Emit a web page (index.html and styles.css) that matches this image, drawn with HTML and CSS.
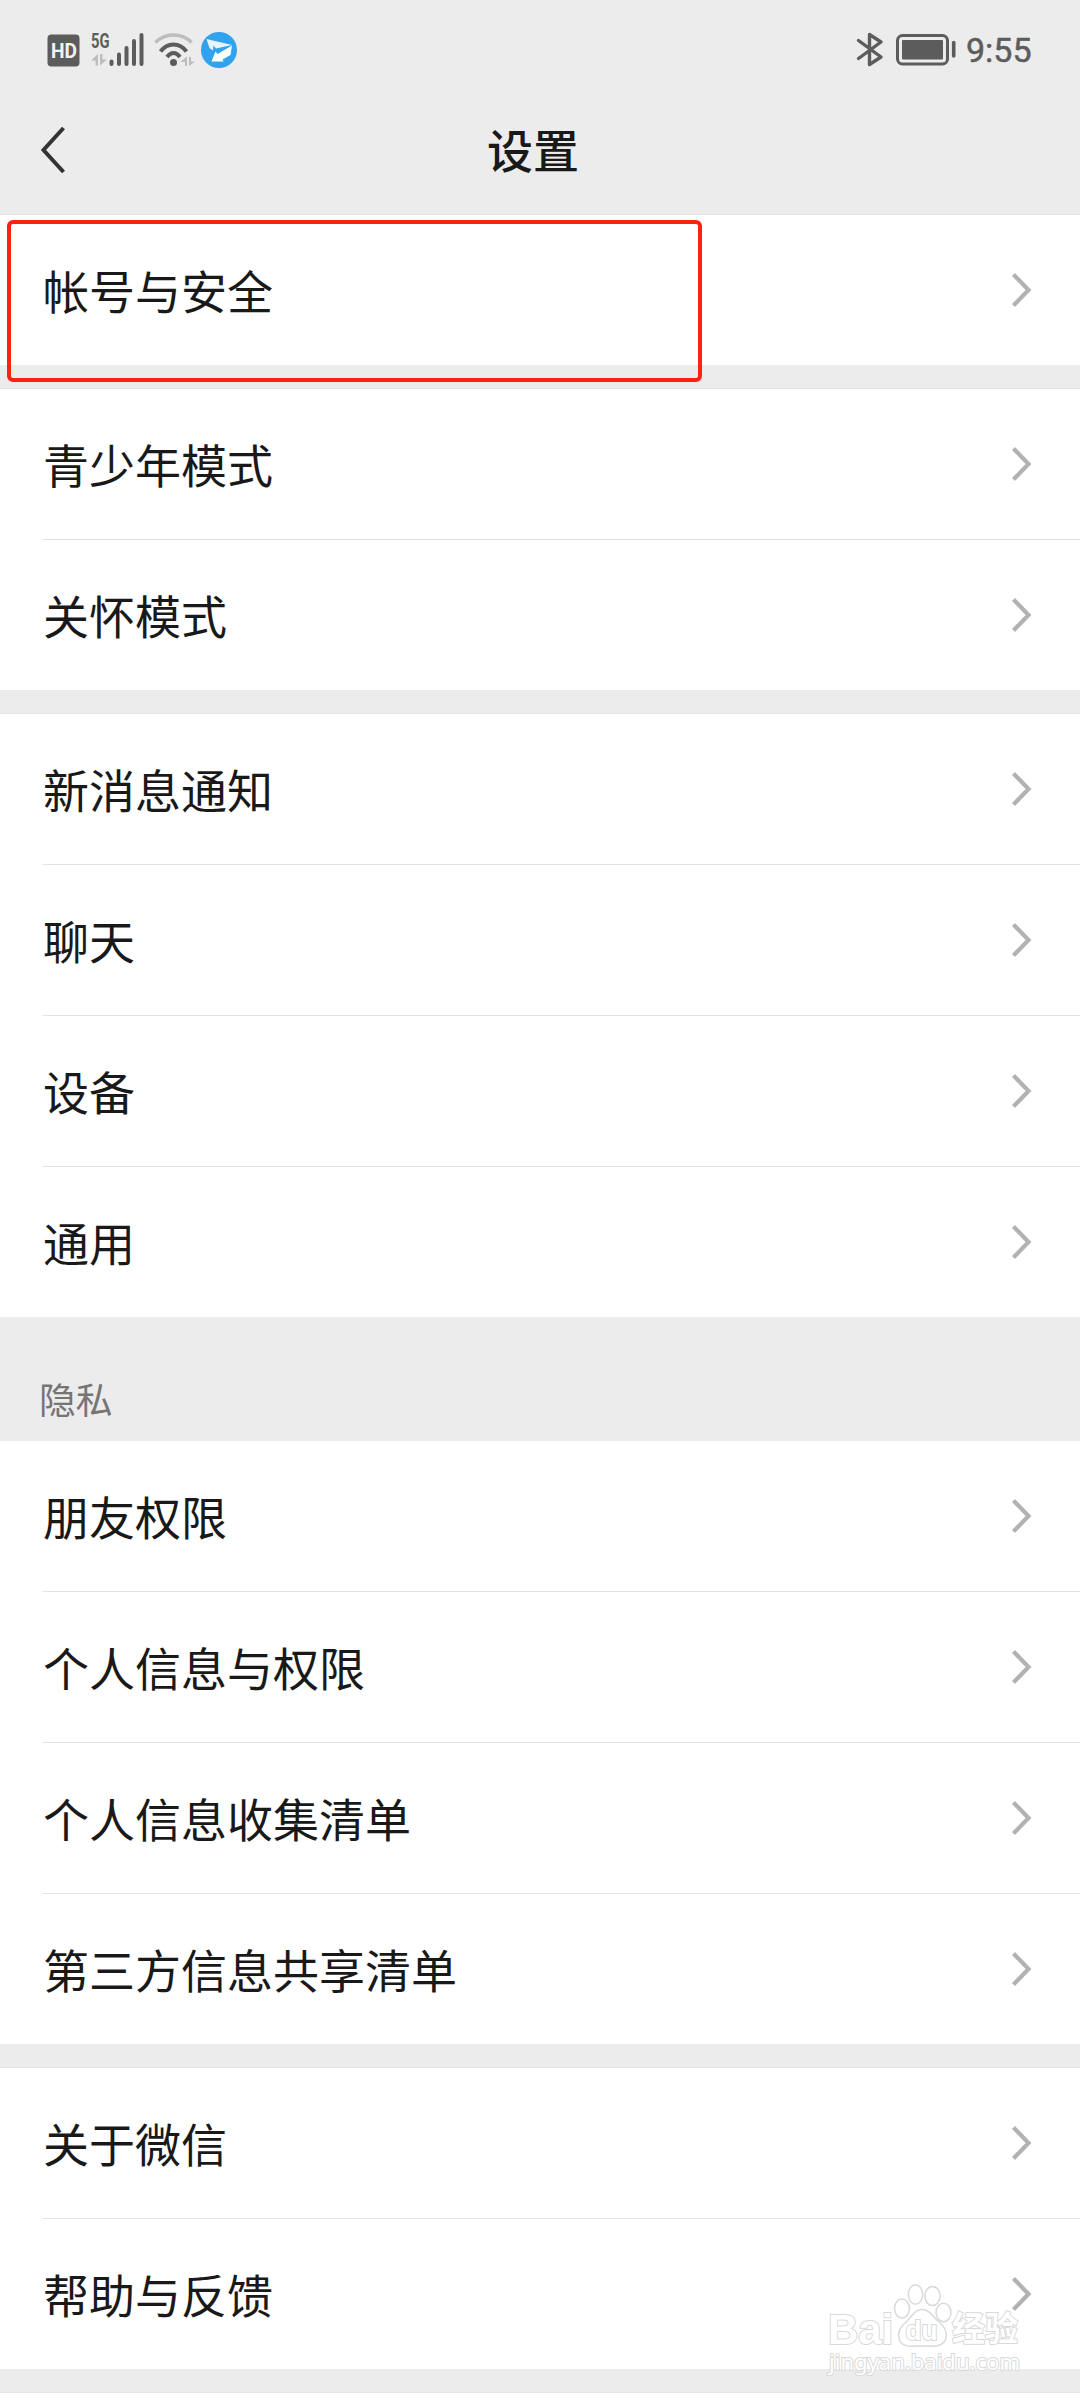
FILE: index.html
```html
<!DOCTYPE html>
<html lang="zh-CN">
<head>
<meta charset="utf-8">
<title>设置</title>
<link rel="stylesheet" href="styles.css">
</head>
<body>
<svg class="defs" width="0" height="0" aria-hidden="true">
  <symbol id="chevron" viewBox="0 0 24 40"><path d="M3.500 4.500 L18.500 20 L3.500 35.500" fill="none" stroke="#b2b2b2" stroke-width="4.2"/></symbol>
</svg>
<div class="screen">
  <header class="top">
    <div class="status">
      <svg class="status-left" width="200" height="44" viewBox="44 28 200 44">
        <rect x="47.5" y="34.5" width="32" height="32" rx="4" fill="#5c5c5c"/>
        <text class="hd" x="51" y="57.5" textLength="26" lengthAdjust="spacingAndGlyphs">HD</text>
        <text class="net" x="91" y="48" textLength="18.5" lengthAdjust="spacingAndGlyphs">5G</text>
        <path d="M91 60.500 L98 54 V65.500 H95.500 V60.500Z M100 54 H102.500 V59.500 H107 L100 65.500Z" fill="#bdbdbd"/>
        <path d="M111.500 64V61.500M119 64V54.500M126.500 64V48M134 64V41M141.500 64V35" stroke="#5c5c5c" stroke-width="4" stroke-linecap="round"/>
        <g fill="none" stroke-linecap="butt">
          <path d="M155.500 42.500 C165 32.500 182 32.500 191.500 42.500" stroke="#bdbdbd" stroke-width="3.500"/>
          <path d="M160.500 51.500 C167.500 42 179.500 42 186.500 51.500" stroke="#5c5c5c" stroke-width="4"/>
          <path d="M167 57 C171 51.500 176 51.500 180 57" stroke="#5c5c5c" stroke-width="4"/>
        </g>
        <circle cx="173.500" cy="62.500" r="3.500" fill="#5c5c5c"/>
        <path d="M180.500 62 L187 56.500 V66 H185 V62Z M189 57 H191 V61.500 H195 L189 66Z" fill="#bdbdbd"/>
        <circle cx="219" cy="50" r="18" fill="#30a2ee"/>
        <path d="M206.500 39 L232 45 L216 48.500 L213.500 45.500 L213 50.500 L209.500 48Z" fill="#e6f5ff"/>
        <path d="M232 45.500 L230.500 55 L222.500 59.500 L223.500 61.500 L211.500 61.500 L215.500 51.500 L217.500 54 Z" fill="#fff"/>
      </svg>
      <div class="status-right">
        <svg width="104" height="44" viewBox="854 28 104 44">
          <path d="M858.500 40.500 L881 57 L869.500 64.500 V34.500 L881 42 L858.500 58.500" fill="none" stroke="#5c5c5c" stroke-width="3.400" stroke-linejoin="round" stroke-linecap="round"/>
          <rect x="897.500" y="35.500" width="50" height="28.500" rx="5" fill="none" stroke="#5c5c5c" stroke-width="3"/>
          <rect x="902" y="40" width="41" height="19.500" rx="1" fill="#5c5c5c"/>
          <path d="M953.700 42.500V56" stroke="#5c5c5c" stroke-width="3.600" stroke-linecap="round"/>
        </svg>
        <span class="time">9:55</span>
      </div>
    </div>
    <div class="nav">
      <svg class="back" width="32" height="60" viewBox="0 0 32 60"><path d="M27.500 9 L7.500 31 L27.500 53" fill="none" stroke="#333" stroke-width="4"/></svg>
      <h1 class="title">设置</h1>
    </div>
  </header>

  <main class="groups">
    <section class="group">
      <div class="row"><span class="label">帐号与安全</span><svg class="chev"><use href="#chevron"/></svg></div>
      <div class="highlight"></div>
    </section>
    <section class="group">
      <div class="row"><span class="label">青少年模式</span><svg class="chev"><use href="#chevron"/></svg></div>
      <div class="row"><span class="label">关怀模式</span><svg class="chev"><use href="#chevron"/></svg></div>
    </section>
    <section class="group">
      <div class="row"><span class="label">新消息通知</span><svg class="chev"><use href="#chevron"/></svg></div>
      <div class="row"><span class="label">聊天</span><svg class="chev"><use href="#chevron"/></svg></div>
      <div class="row"><span class="label">设备</span><svg class="chev"><use href="#chevron"/></svg></div>
      <div class="row"><span class="label">通用</span><svg class="chev"><use href="#chevron"/></svg></div>
    </section>
    <h2 class="section-title">隐私</h2>
    <section class="group">
      <div class="row"><span class="label">朋友权限</span><svg class="chev"><use href="#chevron"/></svg></div>
      <div class="row"><span class="label">个人信息与权限</span><svg class="chev"><use href="#chevron"/></svg></div>
      <div class="row"><span class="label">个人信息收集清单</span><svg class="chev"><use href="#chevron"/></svg></div>
      <div class="row"><span class="label">第三方信息共享清单</span><svg class="chev"><use href="#chevron"/></svg></div>
    </section>
    <section class="group">
      <div class="row"><span class="label">关于微信</span><svg class="chev"><use href="#chevron"/></svg></div>
      <div class="row"><span class="label">帮助与反馈</span><svg class="chev"><use href="#chevron"/></svg></div>
    </section>
    <section class="group rest"></section>
  </main>

  <svg class="watermark" width="240" height="120" viewBox="820 2275 240 120">
    <g fill="#fff" stroke="#d9d9d9" stroke-width="1.500">
      <ellipse cx="902" cy="2308.500" rx="7.500" ry="9.500"/>
      <ellipse cx="915.500" cy="2294.500" rx="7.200" ry="9.800"/>
      <ellipse cx="932.500" cy="2296" rx="7.600" ry="9.600"/>
      <ellipse cx="943.500" cy="2312.500" rx="7.500" ry="9.300"/>
      <path d="M922 2309.500 C930 2309.500 933 2317 939 2322 C945 2327 948 2333 945.500 2339.500 C942 2348 932 2346 922 2346 C912 2346 903 2348 899.500 2340 C897 2333 900 2327 906 2322 C912 2317 914 2309.500 922 2309.500Z"/>
    </g>
    <text class="wm wm-logo" x="828" y="2344" textLength="65" lengthAdjust="spacingAndGlyphs">Bai</text>
    <text class="wm wm-du" x="905.500" y="2339.500" textLength="32" lengthAdjust="spacingAndGlyphs">du</text>
    <text class="wm wm-cn" x="952" y="2341" textLength="66" lengthAdjust="spacingAndGlyphs">经验</text>
    <text class="wm wm-url" x="829" y="2370" textLength="191" lengthAdjust="spacingAndGlyphs">jingyan.baidu.com</text>
  </svg>
</div>
</body>
</html>
```
FILE: styles.css
```css
* { box-sizing: border-box; margin: 0; padding: 0; }

body {
  background: #fff;
  color: #191919;
  font-family: "Noto Sans CJK SC", sans-serif;
}

.defs { position: absolute; }

.screen {
  position: relative;
  width: 1080px;
  height: 2400px;
  overflow: hidden;
  background: #ececec;
}

.top { height: 215px; border-bottom: 1px solid #e4e4e4; }

.status {
  display: flex;
  justify-content: space-between;
  height: 100px;
  padding: 28px 48px 0 44px;
}

.status-right { display: flex; gap: 8px; }

.time {
  width: 66px;
  font: 400 34px/44px Roboto, sans-serif;
  color: #5c5c5c;
  -webkit-text-stroke: 0.5px #5c5c5c;
}

.hd { font: 700 21px Roboto, sans-serif; fill: #f2f2f2; }
.net { font: 700 20px Roboto, sans-serif; fill: #5c5c5c; }

.nav {
  display: grid;
  grid-template-columns: 32px 1fr;
  align-items: center;
  height: 114px;
  padding: 0 82px 16px 36px;
}

.title {
  font-size: 46px;
  font-weight: 500;
  line-height: 60px;
  text-align: center;
  padding-bottom: 2px;
}

.groups { display: flex; flex-direction: column; }

.group { position: relative; background: #fff; }
.group + .group { margin-top: 24px; box-shadow: 0 -1px #e4e4e4; }

.row {
  position: relative;
  display: flex;
  align-items: center;
  justify-content: space-between;
  height: 150px;
  padding: 0 46px 0 43px;
}

.row + .row { height: 151px; padding-top: 1px; }

.row + .row::before {
  content: "";
  position: absolute;
  top: 0;
  left: 43px;
  right: 0;
  height: 1px;
  background: #e3e3e3;
}

.label { font-size: 46px; line-height: 60px; padding-bottom: 3px; }

.chev { width: 24px; height: 40px; }

.highlight {
  position: absolute;
  top: 5px;
  left: 7px;
  width: 695px;
  height: 162px;
  border: 4px solid #ff2213;
  border-radius: 6px;
  z-index: 2;
}

.section-title {
  height: 124px;
  padding: 60px 0 0 39px;
  font-size: 36.8px;
  font-weight: 400;
  line-height: 42px;
  color: #757575;
}

.rest { height: 8px; }

.watermark { position: absolute; left: 820px; top: 2275px; }

.wm { fill: #fff; stroke: #d9d9d9; stroke-width: 2px; paint-order: stroke; }
.wm-logo { font: 700 43px "Liberation Sans", sans-serif; }
.wm-du { font: 700 27px "Liberation Sans", sans-serif; }
.wm-cn { font: 700 34px "Noto Sans CJK SC", sans-serif; }
.wm-url { font: 400 22px "Noto Sans", sans-serif; }
```
